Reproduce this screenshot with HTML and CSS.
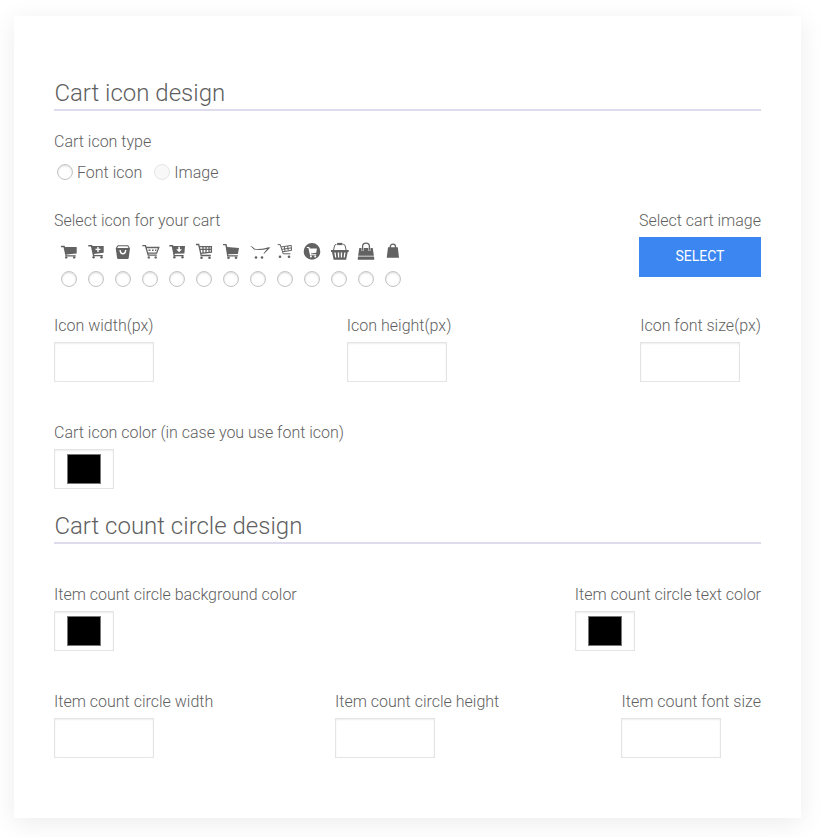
FILE: index.html
```html
<!DOCTYPE html>
<html lang="en">
<head>
<meta charset="utf-8">
<title>Cart settings</title>
<link rel="stylesheet" href="styles.css">
</head>
<body>
<form class="card">
  <h2 class="heading">Cart icon design</h2>

  <div class="type">
    <div class="label">Cart icon type</div>
    <div class="type-options">
      <label class="option"><input class="radio" type="radio" name="type"><span class="option-text">Font icon</span></label>
      <label class="option"><input class="radio" type="radio" name="type" disabled><span class="option-text">Image</span></label>
    </div>
  </div>

  <div class="row row-icons">
    <div class="field">
      <div class="label">Select icon for your cart</div>
      <div class="icons">
        <label class="choice"><svg class="icon" viewBox="0 0 20 20"><path d="M2 3.700h3.600l.5 1.300h11.600v6.400l-10.300 1 .3.800h9v1.200H6.600L4.500 5.200H2z"/><circle cx="7.200" cy="15.400" r="1.200"/><circle cx="15.200" cy="15.400" r="1.200"/></svg><input class="radio" type="radio" name="icon"></label>
        <label class="choice"><svg class="icon" viewBox="0 0 20 20"><path fill-rule="evenodd" d="M2.300 3h3.800l.4 1h11.200v6.800L8 12l.2 1h8.600v1.200H7L4.900 4.400H2.300zM11.300 5v1.800H9.500v1.300h1.800v1.800h1.400V8.100h1.800V6.800h-1.800V5z"/><circle cx="7.600" cy="15.200" r="1.200"/><circle cx="15.500" cy="15.200" r="1.200"/></svg><input class="radio" type="radio" name="icon"></label>
        <label class="choice"><svg class="icon" viewBox="0 0 20 20"><path fill-rule="evenodd" d="M4.700 3.300h10.400L17 6.300 15.700 16q-.1 1-1.100 1H5.200q-1 0-1.100-1L2.700 6.300zM5.300 4.300 4.200 6h11.400l-1.100-1.700zM6.400 8q.3 4.500 3.500 4.500T13.400 8H12q-.2 3-2.100 3T7.800 8z"/></svg><input class="radio" type="radio" name="icon"></label>
        <label class="choice"><svg class="icon" viewBox="0 0 20 20"><path class="line" d="M2.300 3.700h3.200l2.700 9.500h8.600M6 5.500h12.800l-2.200 5.700H7.700"/><path d="M8.500 7.500h2v1.500h-2zM12 7.500h1.600v1.500H12zM15 7.500h1.600l-.5 1.500H15z"/><circle cx="8.800" cy="15.400" r="1.200"/><circle cx="15.700" cy="15.400" r="1.200"/></svg><input class="radio" type="radio" name="icon"></label>
        <label class="choice"><svg class="icon" viewBox="0 0 20 20"><path fill-rule="evenodd" d="M2.300 3H6l.4 1H18l-.6 7.400-9.800.4.200 1.200h8.800v1.200H6.600L4.800 4.400H2.300zM11.300 4.800v2.500H9.200l2.900 3 2.900-3h-2.100V4.800z"/><circle cx="7.400" cy="15.200" r="1.200"/><circle cx="15.500" cy="15.200" r="1.200"/></svg><input class="radio" type="radio" name="icon"></label>
        <label class="choice"><svg class="icon" viewBox="0 0 20 20"><path class="line" d="M2 2.500h2.700l2.500 11h9.600M5.200 4.600h12.200v5.500L6.500 11.400M5.500 7.400h11.900M9 4.600v6.200M12 4.600v6M15 4.600v5.700"/><circle cx="7.500" cy="15.700" r="1.300"/><circle cx="15.500" cy="15.700" r="1.300"/></svg><input class="radio" type="radio" name="icon"></label>
        <label class="choice"><svg class="icon" viewBox="0 0 20 20"><path d="M2 1.900h3.500l.8 3.200 11.700 1-1.100 6-9.800.1.300 1.100h9.500v1.100H6.200L4.400 3.200H2z"/><circle cx="7.500" cy="15.700" r="1.300"/><circle cx="15" cy="15.700" r="1.300"/></svg><input class="radio" type="radio" name="icon"></label>
        <label class="choice"><svg class="icon" viewBox="0 0 20 20"><path d="M2 3.700 4.500 4.800 6.700 6.700Q14 7.600 20.500 5.300l1.800.2-6.100 6.300-.8-.4 3.700-4.300Q12.500 8.500 6 7.600L4 5.600z"/><circle cx="8" cy="15.500" r="1.300"/><circle cx="14" cy="15.500" r="1.300"/></svg><input class="radio" type="radio" name="icon"></label>
        <label class="choice"><svg class="icon" viewBox="0 0 20 20"><path class="line thin" d="M2.700 2.600h2.500l3 9.200h7.200M6 5 16.200 3.400l.3 5-9 1.400M6.800 7.400l9.500-1.500M9.300 4.600l.7 4.700M12.700 4l.5 4.700"/><circle cx="5" cy="14.800" r="1.300"/><circle cx="14" cy="14.800" r="1.300"/></svg><input class="radio" type="radio" name="icon"></label>
        <label class="choice"><svg class="icon" viewBox="0 0 20 20"><path fill-rule="evenodd" d="M10 1.100a8.300 8.300 0 1 0 0 16.600 8.300 8.300 0 0 0 0-16.600zM4.800 4.900h2.500l.6 1.500h7l-.7 4.300-5.300.7.300.9h5v1H8L6.400 6.100H4.800zM8.900 13.500a1 1 0 1 1 0 2 1 1 0 0 1 0-2zM13.200 13.500a1 1 0 1 1 0 2 1 1 0 0 1 0-2z"/></svg><input class="radio" type="radio" name="icon"></label>
        <label class="choice"><svg class="icon" viewBox="0 0 20 20"><path class="line thin" d="M4.500 8.500 5.500 4q.3-1.700 2-1.700M17.200 8.500 16.200 4q-.3-1.700-2-1.700"/><path d="M8.200.900h5.300v2.200H8.200z"/><path fill-rule="evenodd" d="M2 8h17.700v2h-1l-1.600 7.800H4.600L3 10H2zM5.300 10.500l.8 5h1.200l-.6-5zM8.700 10.500l.3 5h1.200v-5zM11.800 10.500v5H13l.2-5zM15.200 10.500l-.6 5h1.200l.7-5z"/></svg><input class="radio" type="radio" name="icon"></label>
        <label class="choice"><svg class="icon" viewBox="0 0 20 20"><path class="line" d="M6.600 8.500V4.600a3.400 3.400 0 0 1 6.800 0v3.900"/><path d="M3.300 6h2.200v2.700h2.200V6h4.600v2.700h2.200V6h2.200l1.200 7.800H2.100zM2 14.600h16l.3 3.100H1.700z"/></svg><input class="radio" type="radio" name="icon"></label>
        <label class="choice"><svg class="icon" viewBox="0 0 20 20"><path class="line" d="M7.300 7V4.800a2.600 2.600 0 0 1 5.200 0V7"/><path d="M5 5.300h9.800L16 15.700H3.700z"/></svg><input class="radio" type="radio" name="icon"></label>
      </div>
    </div>
    <div class="field">
      <div class="label">Select cart image</div>
      <button class="button" type="button">SELECT</button>
    </div>
  </div>

  <div class="row row-sizes">
    <label class="field"><span class="label">Icon width(px)</span><input class="input" type="text"></label>
    <label class="field"><span class="label">Icon height(px)</span><input class="input" type="text"></label>
    <label class="field"><span class="label">Icon font size(px)</span><input class="input" type="text"></label>
  </div>

  <div class="row">
    <label class="field"><span class="label">Cart icon color (in case you use font icon)</span><span class="color"><span class="swatch"></span></span></label>
  </div>

  <h2 class="heading heading-second">Cart count circle design</h2>

  <div class="row">
    <label class="field"><span class="label">Item count circle background color</span><span class="color"><span class="swatch"></span></span></label>
    <label class="field"><span class="label">Item count circle text color</span><span class="color"><span class="swatch"></span></span></label>
  </div>

  <div class="row row-count">
    <label class="field"><span class="label">Item count circle width</span><input class="input" type="text"></label>
    <label class="field"><span class="label">Item count circle height</span><input class="input" type="text"></label>
    <label class="field"><span class="label">Item count font size</span><input class="input" type="text"></label>
  </div>
</form>
</body>
</html>
```
FILE: styles.css
```css
* { box-sizing: border-box; }
body {
  margin: 0;
  min-height: 837px;
  padding: 16px 20px 0 14px;
  background: #fff;
  color: #5f5f5f;
  font: 300 16px/24px Roboto, sans-serif;
}
.card {
  height: 802px;
  padding: 61px 40px 60px;
  background: #fff;
  box-shadow: 0 5px 25px rgba(0, 0, 0, .08);
}
.heading {
  margin: 0;
  height: 34px;
  border-bottom: 2px solid #dddcec;
  font-size: 24px;
  font-weight: 300;
  line-height: 32px;
  text-indent: .4px;
}
.heading-second { margin-top: 21px; }
.type { margin-top: 18px; }
.type-options {
  display: flex;
  gap: 12px;
  margin: 6px 0 0 3px;
}
.option {
  display: flex;
  align-items: center;
  gap: 4px;
  height: 24px;
}
.option-text { padding-top: 2px; }
.radio {
  appearance: none;
  flex: none;
  width: 16px;
  height: 16px;
  margin: 0;
  border: 1px solid #c4c4c4;
  border-radius: 50%;
  background: #fff;
  box-shadow: inset 0 1px 2px rgba(0, 0, 0, .15);
}
.radio:disabled {
  border-color: #e6e6e6;
  background: #f8f8f8;
  box-shadow: none;
}
.row {
  display: flex;
  justify-content: space-between;
  margin-top: 38px;
}
.row-icons { margin-top: 24px; }
.row-sizes { margin-top: 26px; }
.row-sizes .field { min-width: 104px; }
.row-count .field:last-child { min-width: 140px; }
.field {
  display: flex;
  flex-direction: column;
  align-items: flex-start;
  gap: 4px;
}
.label {
  display: block;
  padding-top: 1px;
  white-space: nowrap;
}
.row-count .field:last-child .label { align-self: flex-end; }
.icons {
  display: flex;
  gap: 11px;
  margin: 5px 0 0 7px;
}
.choice {
  display: flex;
  flex-direction: column;
  align-items: center;
  width: 16px;
  gap: 9px;
}
.icon {
  flex: none;
  width: 20px;
  height: 20px;
  overflow: visible;
  fill: #626262;
}
.line {
  fill: none;
  stroke: #626262;
  stroke-width: 1.3;
}
.thin { stroke-width: 1; }
.button {
  width: 122px;
  height: 40px;
  padding: 0 0 2px;
  border: 0;
  background: #3b86f0;
  color: #fff;
  font: 400 14px/38px Roboto, sans-serif;
}
.input,
.color {
  width: 100px;
  height: 40px;
  border: 1px solid #e4e4e4;
  background: #fff;
  box-shadow: inset 0 1px 2px rgba(0, 0, 0, .07);
}
.color {
  display: flex;
  align-items: center;
  justify-content: center;
  width: 60px;
}
.swatch {
  width: 34px;
  height: 30px;
  border: 1px solid #777;
  background: #000;
}
```
